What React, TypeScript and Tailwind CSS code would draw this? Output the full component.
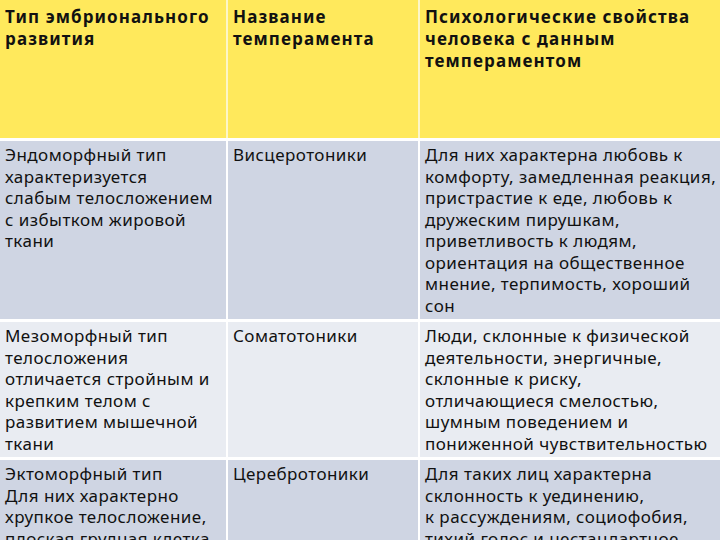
import React from 'react';

type Row = {
  type: string[];
  name: string;
  traits: string[];
  bg: string;
};

const rows: Row[] = [
  {
    type: ['Эндоморфный тип', 'характеризуется', 'слабым телосложением', 'с избытком жировой', 'ткани'],
    name: 'Висцеротоники',
    traits: [
      'Для них характерна любовь к',
      'комфорту, замедленная реакция,',
      'пристрастие к еде, любовь к',
      'дружеским пирушкам,',
      'приветливость к людям,',
      'ориентация на общественное',
      'мнение, терпимость, хороший',
      'сон',
    ],
    bg: 'bg-[#cfd5e3]',
  },
  {
    type: ['Мезоморфный тип', 'телосложения', 'отличается стройным и', 'крепким телом с', 'развитием мышечной', 'ткани'],
    name: 'Соматотоники',
    traits: [
      'Люди, склонные к физической',
      'деятельности, энергичные,',
      'склонные к риску,',
      'отличающиеся смелостью,',
      'шумным поведением и',
      'пониженной чувствительностью',
    ],
    bg: 'bg-[#e9ecf2]',
  },
  {
    type: ['Эктоморфный тип', 'Для них характерно', 'хрупкое телосложение,', 'плоская грудная клетка,', 'слабо развитая мускулатура'],
    name: 'Церебротоники',
    traits: [
      'Для таких лиц характерна',
      'склонность к уединению,',
      'к рассуждениям, социофобия,',
      'тихий голос и нестандартное',
      'поведение',
    ],
    bg: 'bg-[#cfd5e3]',
  },
];

const Lines: React.FC<{ lines: string[] }> = ({ lines }) => (
  <>
    {lines.map((l, i) => (
      <div key={i} className="whitespace-nowrap">{l}</div>
    ))}
  </>
);

export default function App() {
  return (
    <div
      className="w-[720px] h-[540px] overflow-hidden bg-white text-[#111] text-[17px] leading-[21.5px]"
      style={{ fontFamily: '"Noto Sans", "DejaVu Sans", sans-serif' }}
    >
      {/* header */}
      <div className="grid grid-cols-[226px_190px_1fr] gap-x-[2px] bg-[#fdf6c8] font-bold leading-[22px] tracking-[1.1px]">
        <div className="bg-[#ffe95c] h-[138px] px-[5px] pt-[6px]">
          <Lines lines={['Тип эмбрионального', 'развития']} />
        </div>
        <div className="bg-[#ffe95c] h-[138px] px-[5px] pt-[6px]">
          <Lines lines={['Название', 'темперамента']} />
        </div>
        <div className="bg-[#ffe95c] h-[138px] px-[5px] pt-[6px]">
          <Lines lines={['Психологические свойства', 'человека с данным', 'темпераментом']} />
        </div>
      </div>

      <div className="grid grid-cols-[226px_190px_1fr] gap-x-[2px] gap-y-[3px] bg-white pt-[3px] tracking-[0.45px]">
        {rows.map((r, i) => (
          <React.Fragment key={i}>
            <div className={`${r.bg} px-[5px] py-[3px]`}>
              <Lines lines={r.type} />
            </div>
            <div className={`${r.bg} px-[5px] py-[3px]`}>
              <Lines lines={[r.name]} />
            </div>
            <div className={`${r.bg} px-[5px] py-[3px]`}>
              <Lines lines={r.traits} />
            </div>
          </React.Fragment>
        ))}
      </div>
    </div>
  );
}
